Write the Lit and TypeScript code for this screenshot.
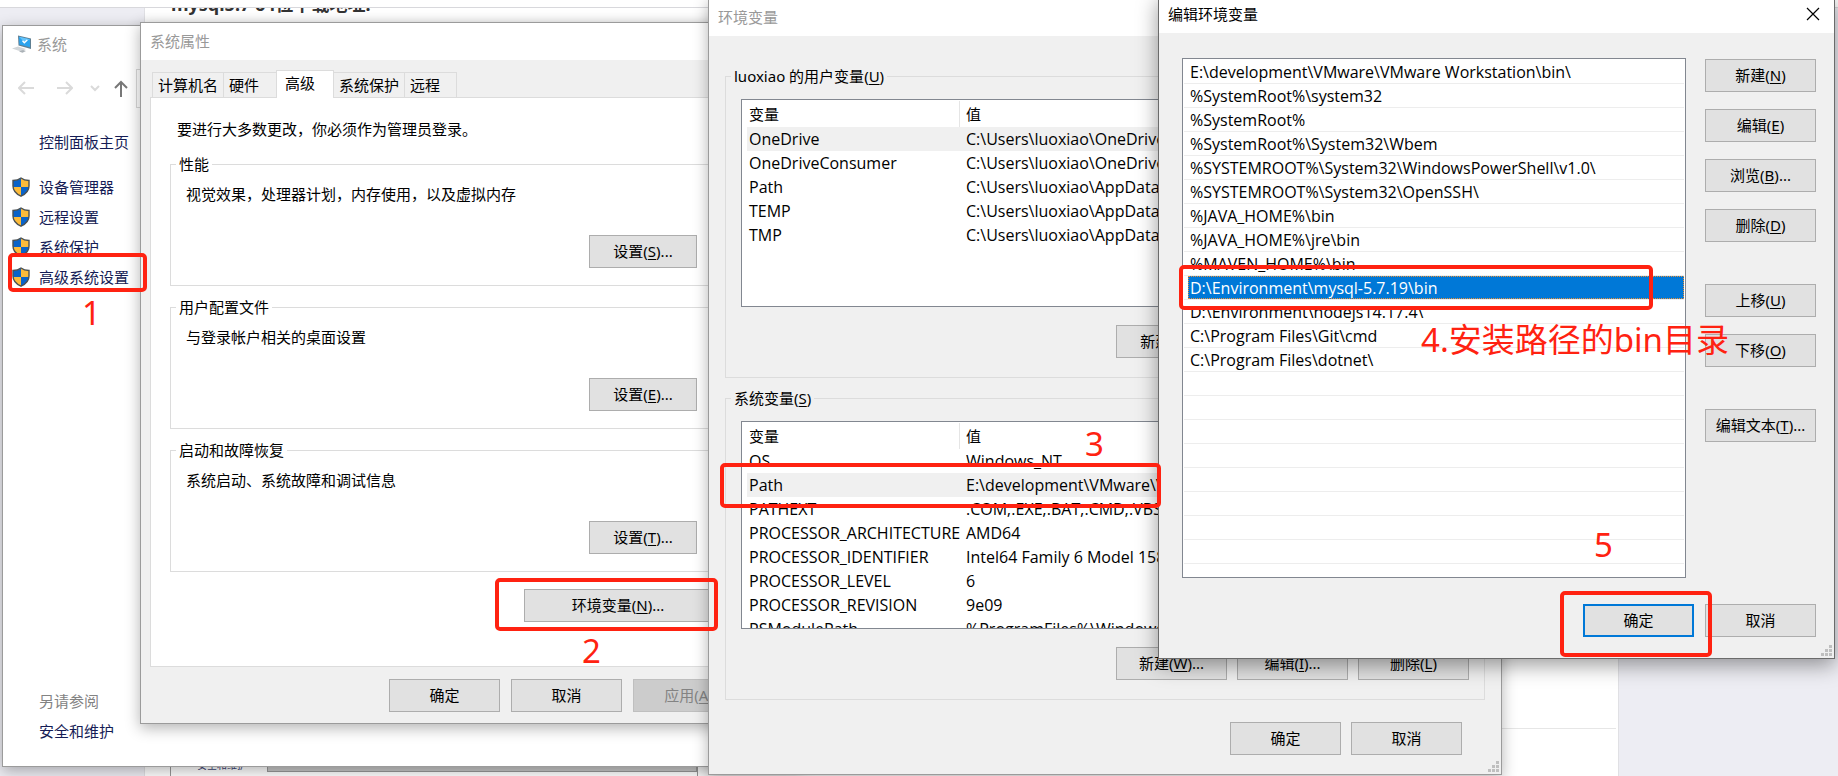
import { LitElement, html, css, svg } from "lit";
import { customElement } from "lit/decorators.js";

type Row = [string, string];

const userVars: Row[] = [
  ["OneDrive", "C:\\Users\\luoxiao\\OneDrive"],
  ["OneDriveConsumer", "C:\\Users\\luoxiao\\OneDrive"],
  ["Path", "C:\\Users\\luoxiao\\AppData\\Local\\Microsoft\\WindowsApps;"],
  ["TEMP", "C:\\Users\\luoxiao\\AppData\\Local\\Temp"],
  ["TMP", "C:\\Users\\luoxiao\\AppData\\Local\\Temp"],
];

const systemVars: Row[] = [
  ["OS", "Windows_NT"],
  ["Path", "E:\\development\\VMware\\VMware Workstation\\bin\\;"],
  ["PATHEXT", ".COM;.EXE;.BAT;.CMD;.VBS;.VBE;.JS;.JSE"],
  ["PROCESSOR_ARCHITECTURE", "AMD64"],
  ["PROCESSOR_IDENTIFIER", "Intel64 Family 6 Model 158 Stepping 9"],
  ["PROCESSOR_LEVEL", "6"],
  ["PROCESSOR_REVISION", "9e09"],
  ["PSModulePath", "%ProgramFiles%\\WindowsPowerShell\\Modules"],
];

const paths = [
  "E:\\development\\VMware\\VMware Workstation\\bin\\",
  "%SystemRoot%\\system32",
  "%SystemRoot%",
  "%SystemRoot%\\System32\\Wbem",
  "%SYSTEMROOT%\\System32\\WindowsPowerShell\\v1.0\\",
  "%SYSTEMROOT%\\System32\\OpenSSH\\",
  "%JAVA_HOME%\\bin",
  "%JAVA_HOME%\\jre\\bin",
  "%MAVEN_HOME%\\bin",
  "D:\\Environment\\mysql-5.7.19\\bin",
  "D:\\Environment\\nodejs14.17.4\\",
  "C:\\Program Files\\Git\\cmd",
  "C:\\Program Files\\dotnet\\",
];
const selectedPath = 9;

const shield = html`<svg class="shield" viewBox="0 0 18 20" aria-hidden="true">
  <path d="M9 1C6.600 2.800 4 3.400 1 3.500V9c0 4.800 3.200 8 8 10.200z" fill="#0a63c9" />
  <path d="M9 1c2.400 1.800 5 2.400 8 2.500V9c0 4.800-3.200 8-8 10.200z" fill="#fdbb3a" />
  <path d="M1 10h8v9.200C4.500 17.200 1.300 14.300 1 10z" fill="#fdbb3a" />
  <path d="M17 10H9v9.200c4.500-2 7.700-4.900 8-9.200z" fill="#0a63c9" />
  <path d="M9 1C6.600 2.800 4 3.400 1 3.500V9c0 4.800 3.200 8 8 10.200C13.800 17 17 13.800 17 9V3.500C14 3.400 11.400 2.800 9 1z" fill="none" stroke="#4c5254" stroke-width="1.400" />
</svg>`;

const computer = html`<svg class="computer" viewBox="0 0 20 18" aria-hidden="true">
  <path d="M6 .5 19 3.500V14L6.500 10.500z" fill="#5f7f92" />
  <path d="M7 1.800 18 4.300V12.300L7.400 9.500z" fill="#2aa3ee" />
  <path d="M7 1.800 18 4.300 12 7z" fill="#63c3fa" />
  <path d="M10.500 5.800l1.800 2 3-2.700" fill="none" stroke="#fff" stroke-width="1.300" />
  <path d="M0 13.500 6 11.500l8 2.500-5 2.500z" fill="#d2d6d9" />
  <path d="M7 16.500l4-1.500 3 1-3.500 1.800z" fill="#aab1b6" />
</svg>`;

const grip = html`<svg class="grip" viewBox="0 0 11 11" aria-hidden="true">
  ${[[8, 0], [4, 4], [8, 4], [0, 8], [4, 8], [8, 8]].map(
    ([x, y]) => svg`<rect x=${x} y=${y} width="3" height="3" fill="#bfbfbf" />`
  )}
</svg>`;

const key = (text: string, k: string, tail = "") => html`${text}(<u>${k}</u>)${tail}`;

@customElement("app-root")
export class AppRoot extends LitElement {
  static styles = css`
    :host {
      display: block;
      position: relative;
      min-height: 100vh;
      overflow: hidden;
      background: #ededf3;
      color: #000;
      font: 15px/20px "Noto Sans", "Noto Sans CJK SC", sans-serif;
    }
    * { box-sizing: border-box; }
    u { text-underline-offset: 2px; }
    a { color: #151c55; text-decoration: none; }

    .page { padding-top: 7px; background: #fff; }
    .sheet {
      height: calc(100vh - 7px);
      margin: 0 219px 0 144px;
      background: #fff;
      border: solid #e0e0e4;
      border-width: 0 1px;
      overflow: hidden;
      display: flex;
      flex-direction: column;
    }
    .backdrop { background: #ededf3; border-top: 1px solid #d8d8dc; }
    .sheet h2 {
      margin: -16px 0 0 26px;
      font-size: 18px;
      line-height: 24px;
      color: #333;
    }
    .shot {
      margin: auto 0 0 25px;
      width: 528px;
      height: 17px;
      border: solid #999;
      border-width: 0 1px;
      padding-left: 26px;
      display: flex;
      font-size: 10px;
      line-height: 10px;
      color: #3d4475;
    }
    .shot-bar { flex: 1; margin-left: 20px; height: 12px; background: #c8c8c8; border: 1px solid #999; }
    .rule { position: absolute; left: 1400px; right: 222px; top: 728px; height: 1px; background: #e6e6e6; }

    .window {
      position: absolute;
      border: 1px solid #9b9b9b;
      background: #f0f0f0;
      box-shadow: 0 4px 14px rgba(0, 0, 0, 0.3);
      display: flex;
      flex-direction: column;
    }
    .title {
      display: flex;
      align-items: center;
      height: 37px;
      padding: 0 9px 2px;
      background: #fff;
      color: #999;
      font-size: 15px;
      font-weight: 400;
      margin: 0;
    }
    button {
      font: inherit;
      color: #000;
      width: 111px;
      height: 33px;
      padding: 0 0 2px;
      background: #e1e1e1;
      border: 1px solid #adadad;
      border-radius: 0;
      white-space: nowrap;
      flex: none;
    }
    button:disabled { background: #ccc; border-color: #bfbfbf; color: #838383; }
    .row { display: flex; justify-content: flex-end; gap: 11px; }
    fieldset { margin: 0; border: 1px solid #dcdcdc; min-width: 0; }
    legend { margin-left: 6px; padding: 0 3px; line-height: 20px; }
    .grip { position: absolute; right: 2px; bottom: 2px; width: 11px; height: 11px; }

    .system { left: 2px; top: 25px; width: 800px; height: 742px; background: #fff; }
    .system .title { height: 38px; gap: 5px; }
    .computer { width: 20px; height: 18px; }
    .nav { display: flex; align-items: center; height: 48px; padding-left: 15px; }
    .nav svg { height: 18px; fill: none; stroke: #dadada; stroke-width: 2; flex: none; }
    .arrow { width: 16px; margin-right: 23px; }
    .chevron { width: 10px; margin: 0 14px 0 -6px; }
    .nav .up { width: 14px; stroke: #777; margin-right: 8px; }
    .address { flex: 1; height: 39px; border: 1px solid #d9d9d9; }
    .side { flex: 1; display: flex; flex-direction: column; gap: 10px; padding: 20px 0 25px 9px; align-items: flex-start; }
    .side a, .side span { display: flex; align-items: center; gap: 9px; }
    .side .indent { padding-left: 27px; }
    .side .home { margin-bottom: 15px; }
    .side .also { margin-top: auto; color: #838383; }
    .shield { width: 18px; height: 20px; }

    .props { left: 140px; top: 22px; width: 614px; }
    .props-body { padding: 10px 9px 11px; }
    .tabs { display: flex; align-items: flex-end; height: 27px; padding-left: 2px; }
    .tabs button {
      width: auto;
      height: 25px;
      background: #f0f0f0;
      border: 1px solid #dcdcdc;
      border-width: 1px 1px 0 0;
      text-align: left;
      padding: 0 5px;
    }
    .tabs button:first-child { border-left-width: 1px; }
    .tabs .mid { width: 53px; }
    .tabs .last { width: 52px; }
    .tabs .active { width: 58px; height: 28px; margin-bottom: -1px; background: #fff; padding: 0 8px 4px; position: relative; border-left: 1px solid #dcdcdc; margin-left: -1px; }
    .panel { height: 570px; background: #fff; border: 1px solid #dcdcdc; padding: 21px 19px 0; }
    .panel p { margin: 0; }
    .panel .intro { padding-left: 7px; margin-bottom: 15px; }
    .panel fieldset { padding: 0 26px 17px 15px; margin-bottom: 11px; }
    .panel legend { margin-left: -10px; }
    .panel fieldset p { margin: 10px 0 31px; }
    .panel .set { width: 108px; }
    .panel .env { margin: 17px 12px 0 0; }
    .env button { width: 188px; }
    .props .bottom { margin-top: 12px; }

    .vars { left: 708px; top: -2px; width: 794px; }
    .vars-body { padding: 30px 16px 19px; }
    .vars fieldset { padding: 0 15px 19px; margin-bottom: 10px; }
    .vars legend { margin-left: -10px; }
    .listbox {
      margin: 13px 1px 18px 0;
      height: 208px;
      border: 1px solid #828790;
      background: #fff;
      overflow: hidden;
      padding: 1px 5px 0;
    }
    table { width: 100%; table-layout: fixed; border-collapse: separate; border-spacing: 0; text-align: left; white-space: nowrap; }
    th { height: 26px; padding: 0 2px; font-weight: 400; }
    td { height: 24px; padding: 0 2px; }
    td, .paths { font-family: "Open Sans", "Noto Sans CJK SC", sans-serif; font-size: 16px; }
    th:first-child { width: 213px; border-right: 1px solid #e5e5e5; }
    th + th, td + td { padding-left: 6px; }
    .picked td { background: #f0f0f0; }
    .vars .row { gap: 10px; }
    .vars .bottom { margin: 22px 23px 0 0; }

    .edit { left: 1158px; top: -5px; width: 677px; border-color: #6b6b6b; box-shadow: 0 6px 20px rgba(0, 0, 0, 0.4); }
    .edit .title { color: #000; justify-content: space-between; padding-right: 14px; }
    .title .close { width: 14px; height: 14px; border: 0; background: none; display: flex; padding: 0; }
    .close svg { width: 14px; height: 14px; stroke: #000; fill: none; stroke-width: 1.2; }
    .edit-body { padding: 25px 18px 21px 23px; }
    .split { display: flex; gap: 19px; }
    .paths {
      flex: 1;
      height: 520px;
      margin: 0;
      padding: 1px;
      list-style: none;
      border: 1px solid #828790;
      background: repeating-linear-gradient(#fff 0 23px, #ededed 23px 24px) 1px 1px / calc(100% - 2px) 504px no-repeat #fff;
    }
    .paths li { height: 24px; padding: 0 0 1px 4px; }
    .paths span { display: block; height: 23px; padding-left: 2px; line-height: 24px; }
    .paths .on { background: #0078d7; color: #fff; outline: 1px dotted #e8913a; outline-offset: -1px; }
    .actions { display: flex; flex-direction: column; gap: 17px; padding-top: 1px; }
    .actions .apart { margin-top: 25px; }
    .edit .bottom { margin-top: 26px; }
    .edit .primary { border: 2px solid #0078d7; }

    .mark { position: absolute; border: 4px solid #ff2211; border-radius: 5px; pointer-events: none; }
    .note { position: absolute; color: #ff2211; font-size: 33px; line-height: 40px; white-space: nowrap; }
    .m1 { left: 8px; top: 253px; width: 139px; height: 39px; }
    .m2 { left: 495px; top: 578px; width: 223px; height: 53px; }
    .m3 { left: 720px; top: 463px; width: 441px; height: 45px; }
    .m4 { left: 1179px; top: 265px; width: 474px; height: 45px; }
    .m5 { left: 1560px; top: 591px; width: 152px; height: 66px; }
    .n1 { left: 82px; top: 293px; }
    .n2 { left: 582px; top: 631px; }
    .n3 { left: 1085px; top: 424px; }
    .n4 { left: 1421px; top: 320px; }
    .n5 { left: 1594px; top: 525px; }
  `;

  private table(rows: Row[], picked: number) {
    return html`<div class="listbox">
      <table>
        <thead><tr><th>变量</th><th>值</th></tr></thead>
        <tbody>
          ${rows.map(([name, value], i) => html`<tr class=${i === picked ? "picked" : ""}><td>${name}</td><td>${value}</td></tr>`)}
        </tbody>
      </table>
    </div>`;
  }

  private group(name: string, text: string, k: string) {
    return html`<fieldset>
      <legend>${name}</legend>
      <p>${text}</p>
      <div class="row"><button class="set">${key("设置", k, "...")}</button></div>
    </fieldset>`;
  }

  render() {
    return html`
      <div class="page">
        <div class="backdrop">
          <div class="sheet">
            <h2>mysql5.7 64位下载地址:</h2>
            <div class="shot">安全和维护<div class="shot-bar"></div></div>
          </div>
        </div>
      </div>
      <div class="rule"></div>

      <section class="window system">
        <h1 class="title">${computer}系统</h1>
        <div class="nav">
          <svg class="arrow" viewBox="0 0 16 18"><path d="M16 9H1M7 3 1 9l6 6" /></svg>
          <svg class="arrow" viewBox="0 0 16 18"><path d="M0 9h15M9 3l6 6-6 6" /></svg>
          <svg class="chevron" viewBox="0 0 10 18"><path d="M1 7l4 4 4-4" /></svg>
          <svg class="up" viewBox="0 0 14 18"><path d="M7 18V3M1 9l6-6 6 6" /></svg>
          <div class="address"></div>
        </div>
        <nav class="side">
          <a class="indent home" href="#home">控制面板主页</a>
          <a href="#devices">${shield}设备管理器</a>
          <a href="#remote">${shield}远程设置</a>
          <a href="#protection">${shield}系统保护</a>
          <a href="#advanced">${shield}高级系统设置</a>
          <span class="indent also">另请参阅</span>
          <a class="indent" href="#security">安全和维护</a>
        </nav>
      </section>

      <section class="window props">
        <h1 class="title">系统属性</h1>
        <div class="props-body">
          <div class="tabs" role="tablist">
            <button role="tab">计算机名</button>
            <button role="tab" class="mid">硬件</button>
            <button role="tab" class="active" aria-selected="true">高级</button>
            <button role="tab">系统保护</button>
            <button role="tab" class="last">远程</button>
          </div>
          <div class="panel">
            <p class="intro">要进行大多数更改，你必须作为管理员登录。</p>
            ${this.group("性能", "视觉效果，处理器计划，内存使用，以及虚拟内存", "S")}
            ${this.group("用户配置文件", "与登录帐户相关的桌面设置", "E")}
            ${this.group("启动和故障恢复", "系统启动、系统故障和调试信息", "T")}
            <div class="row env"><button>${key("环境变量", "N", "...")}</button></div>
          </div>
          <div class="row bottom">
            <button>确定</button>
            <button>取消</button>
            <button disabled>${key("应用", "A")}</button>
          </div>
        </div>
      </section>

      <section class="window vars">
        <h1 class="title">环境变量</h1>
        <div class="vars-body">
          <fieldset>
            <legend>${key("luoxiao 的用户变量", "U")}</legend>
            ${this.table(userVars, 0)}
            <div class="row">
              <button>${key("新建", "N", "...")}</button>
              <button>${key("编辑", "E", "...")}</button>
              <button>${key("删除", "D")}</button>
            </div>
          </fieldset>
          <fieldset>
            <legend>${key("系统变量", "S")}</legend>
            ${this.table(systemVars, 1)}
            <div class="row">
              <button>${key("新建", "W", "...")}</button>
              <button>${key("编辑", "I", "...")}</button>
              <button>${key("删除", "L")}</button>
            </div>
          </fieldset>
          <div class="row bottom"><button>确定</button><button>取消</button></div>
        </div>
        ${grip}
      </section>

      <section class="window edit">
        <h1 class="title">
          编辑环境变量
          <button class="close" aria-label="关闭"><svg viewBox="0 0 14 14"><path d="M1 1l12 12M13 1 1 13" /></svg></button>
        </h1>
        <div class="edit-body">
          <div class="split">
            <ul class="paths">
              ${paths.map((p, i) => html`<li><span class=${i === selectedPath ? "on" : ""}>${p}</span></li>`)}
            </ul>
            <div class="actions">
              <button>${key("新建", "N")}</button>
              <button>${key("编辑", "E")}</button>
              <button>${key("浏览", "B", "...")}</button>
              <button>${key("删除", "D")}</button>
              <button class="apart">${key("上移", "U")}</button>
              <button>${key("下移", "O")}</button>
              <button class="apart">${key("编辑文本", "T", "...")}</button>
            </div>
          </div>
          <div class="row bottom"><button class="primary">确定</button><button>取消</button></div>
        </div>
        ${grip}
      </section>

      <div class="mark m1"></div><div class="note n1">1</div>
      <div class="mark m2"></div><div class="note n2">2</div>
      <div class="mark m3"></div><div class="note n3">3</div>
      <div class="mark m4"></div><div class="note n4">4.安装路径的bin目录</div>
      <div class="mark m5"></div><div class="note n5">5</div>
    `;
  }
}
